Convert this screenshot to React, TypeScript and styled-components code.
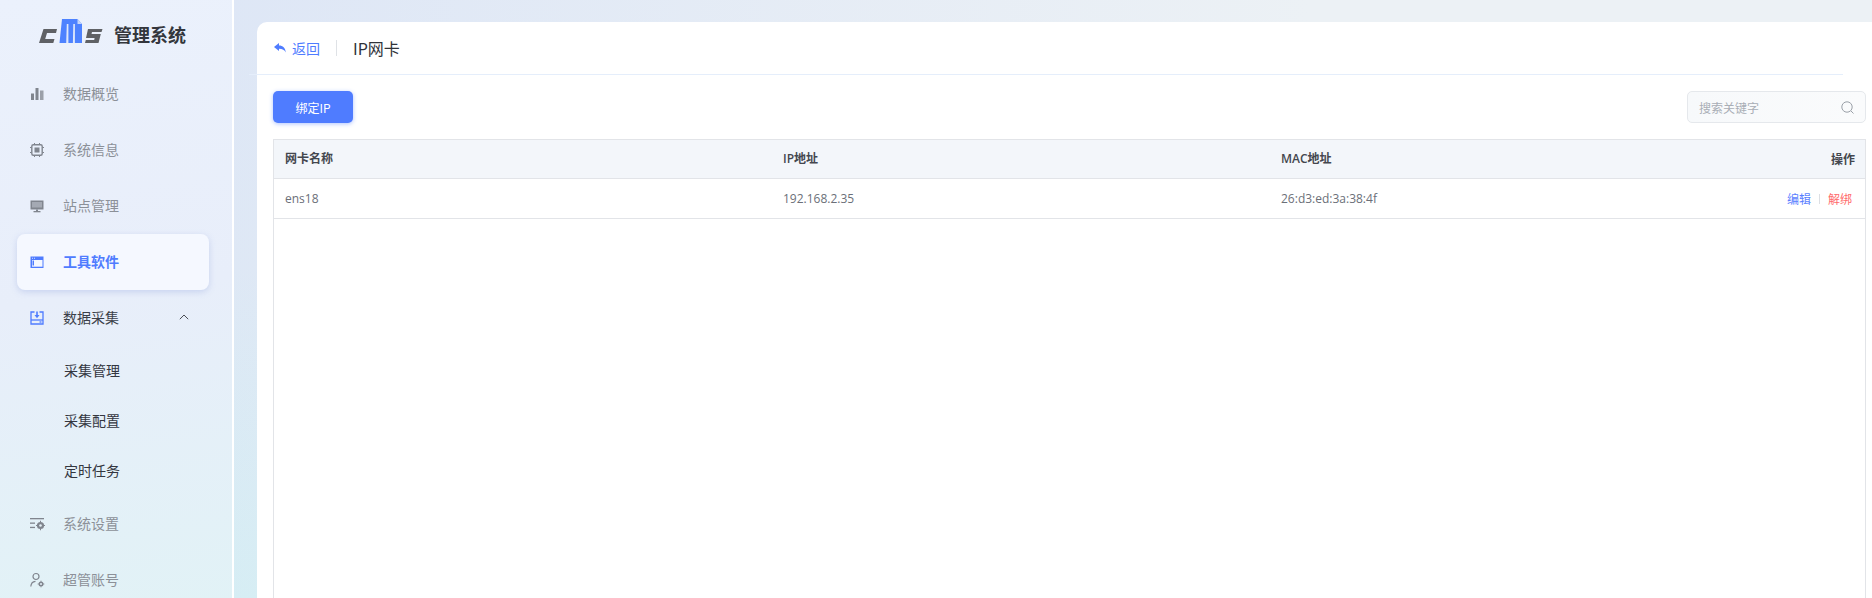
import React from "react";
import styled, { createGlobalStyle } from "styled-components";

const Global = createGlobalStyle`
  html, body { margin: 0; padding: 0; height: 598px; overflow: hidden; }
  body { font-family: "Noto Sans CJK SC", "Liberation Sans", sans-serif; }
  * { box-sizing: border-box; }
`;

const Page = styled.div`
  display: flex;
  width: 1872px;
  height: 598px;
  overflow: hidden;
  background:
    linear-gradient(90deg, rgba(236, 241, 245, 0) 8%, #ecf1f5 70%),
    linear-gradient(180deg, #dde6f6 0%, #dde7f5 45%, #d4edf4 100%);
`;

const Sidebar = styled.aside`
  flex: 0 0 234px;
  height: 608px;
  border-right: 2px solid #fff;
  background: linear-gradient(172deg, #ebf1fc 0%, #e8eefa 48%, #e1f2f6 100%);
`;

const Brand = styled.div`
  display: flex;
  align-items: center;
  height: 66px;
  padding: 4px 0 0 38px;
  gap: 11px;
`;

const BrandName = styled.span`
  font-size: 18px;
  font-weight: 700;
  color: #33363c;
  line-height: 26px;
  margin-top: -2px;
`;

const Nav = styled.nav`
  display: flex;
  flex-direction: column;
`;

const NavItem = styled.div<{ $active?: boolean; $open?: boolean }>`
  display: flex;
  align-items: center;
  height: 56px;
  margin: 0 23px 0 17px;
  padding-left: 13px;
  gap: 19px;
  font-size: 14px;
  border-radius: 8px;
  color: ${(p) => (p.$active ? "#4f7cff" : p.$open ? "#3b3f48" : "#8c9098")};
  font-weight: ${(p) => (p.$active ? 700 : 400)};
  background: ${(p) => (p.$active ? "#f5f8ff" : "transparent")};
  box-shadow: ${(p) => (p.$active ? "0 2px 6px rgba(140,160,220,.35)" : "none")};
`;

const NavIcon = styled.span<{ $color?: string }>`
  display: flex;
  width: 14px;
  height: 14px;
  flex: none;
  color: ${(p) => p.$color || "#80858e"};
  svg { display: block; overflow: visible; }
`;

const NavLabel = styled.span`
  flex: 1;
  margin-top: -2px;
`;

const Chevron = styled.span`
  display: flex;
  margin: -3px 20px 0 0;
  color: #4a4e56;
`;

const SubNav = styled.div`
  display: flex;
  flex-direction: column;
`;

const SubItem = styled.div`
  display: flex;
  align-items: center;
  height: 50px;
  padding: 0 0 3px 64px;
  font-size: 14px;
  color: #33363f;
`;

const Main = styled.main`
  flex: 1;
  min-width: 0;
  padding: 22px 0 0 23px;
`;

const Card = styled.section`
  position: relative;
  height: 600px;
  padding: 0 6px 0 16px;
  background: #fff;
  border-radius: 10px 0 0 0;
`;

const TopBar = styled.header`
  display: flex;
  align-items: center;
  height: 53px;
  margin: 0 23px 0 -24px;
  padding: 0 0 0 25px;
  border-bottom: 1px solid #e5eefb;
`;

const BackLink = styled.span`
  display: flex;
  align-items: center;
  gap: 6px;
  font-size: 14px;
  color: #4f7cff;
`;

const TitleDivider = styled.span`
  width: 1px;
  height: 16px;
  margin: 0 16px;
  background: #dfe2e6;
`;

const Title = styled.h1`
  margin: 0;
  font-size: 16px;
  font-weight: 400;
  color: #30333a;
`;

const Toolbar = styled.div`
  display: flex;
  justify-content: space-between;
  padding-top: 16px;
`;

const PrimaryButton = styled.button`
  width: 80px;
  height: 32px;
  padding: 0;
  border: 0;
  border-radius: 5px;
  font: inherit;
  font-size: 12px;
  color: #fff;
  background: #4f7cff;
  box-shadow: 0 1px 4px rgba(79, 124, 255, 0.45);
`;

const SearchBox = styled.div`
  display: flex;
  align-items: center;
  justify-content: space-between;
  width: 179px;
  height: 32px;
  padding: 0 11px 0 11px;
  border: 1px solid #e5e8ec;
  border-radius: 5px;
  background: linear-gradient(90deg, #f7f9fb, #fafbfc);
  font-size: 12px;
  color: #a9aeb6;
  svg { display: block; color: #9aa0a8; }
`;

const Table = styled.div`
  height: 500px;
  margin-top: 16px;
  border: 1px solid #e2e4e8;
  border-bottom: 0;
`;

const Row = styled.div<{ $head?: boolean }>`
  display: grid;
  grid-template-columns: 498px 498px 498px 1fr;
  align-items: center;
  height: ${(p) => (p.$head ? "39px" : "40px")};
  padding-bottom: ${(p) => (p.$head ? "2px" : "0")};
  border-bottom: 1px solid #e2e4e8;
  font-size: 12px;
  font-weight: ${(p) => (p.$head ? 600 : 400)};
  color: ${(p) => (p.$head ? "#44474e" : "#6b6f78")};
  background: ${(p) => (p.$head ? "#f3f6fa" : "#fff")};
`;

const Cell = styled.div<{ $end?: boolean }>`
  display: flex;
  align-items: center;
  justify-content: ${(p) => (p.$end ? "flex-end" : "flex-start")};
  padding: 0 ${(p) => (p.$end ? "10px" : "12px")} 0 ${(p) => (p.$end ? "0" : "11px")};
  font-family: ${(p) => (p.$end ? "inherit" : '"Open Sans", "Noto Sans CJK SC", sans-serif')};
`;

const RowActions = styled.div`
  display: flex;
  align-items: center;
  margin-right: 3px;
`;

const RowAction = styled.span<{ $danger?: boolean }>`
  font-weight: 400;
  color: ${(p) => (p.$danger ? "#ff6b6b" : "#5b7fff")};
`;

const ActionDivider = styled.span`
  width: 1px;
  height: 10px;
  margin: 0 8px;
  background: #dcdfe4;
`;

const Logo = () => (
  <svg width="65" height="32" viewBox="0 0 65 32">
    <path fill="#5f6165" d="M5.500 10H19l-1 4H9l-1.800 6H16.500l-1.200 4H1z" />
    <path fill="#4d82ff" d="M24 0h15.500L44 5v19H21.500z" />
    <path fill="#dfe8fb" d="M28.800 5h1.600v19h-2.200zM35.300 5h1.600v19h-2z" />
    <path fill="#c5d6fb" d="M39.500 0v5H44z" />
    <path fill="#5f6165" d="M50 10h14.500l-1 3H54l-.5 2h9.300l-2.300 9H47l.8-3h8.400l.4-2H48z" />
  </svg>
);

const IconBars = () => (
  <svg width="14" height="14" viewBox="0 0 14 14" fill="currentColor">
    <rect x="1" y="6.500" width="3" height="6.500" />
    <rect x="5.500" y="1" width="3" height="12" />
    <rect x="10" y="3.500" width="3.500" height="9.500" opacity=".75" />
  </svg>
);

const IconChip = () => (
  <svg width="14" height="14" viewBox="0 0 14 14" fill="none" stroke="currentColor">
    <rect x="1.800" y="1.800" width="10.400" height="10.400" rx="1.500" strokeWidth="1.400" />
    <rect x="4.500" y="4.500" width="5" height="5" fill="currentColor" stroke="none" />
    <path d="M4.500 0v1.500M9.500 0v1.500M4.500 12.500V14M9.500 12.500V14M0 4.500h1.500M0 9.500h1.500M12.500 4.500H14M12.500 9.500H14" strokeWidth="1" />
  </svg>
);

const IconMonitor = () => (
  <svg width="14" height="14" viewBox="0 0 14 14" fill="currentColor">
    <path d="M0.500 1.500h13v9h-13z" />
    <path fill="#e8eefa" d="M2 3h10v5.500H2z" opacity=".35" />
    <rect x="6" y="10.500" width="2" height="2" />
    <rect x="3.500" y="12" width="7" height="1.300" />
  </svg>
);

const IconWindow = () => (
  <svg width="14" height="14" viewBox="0 0 14 14">
    <path fill="#4f7cff" d="M0.500 1.500h13v11.500h-13z" />
    <path fill="#f5f8ff" d="M2 5h10.500v6.700H2z" />
    <path fill="#d7e2ff" d="M2 2.700h1v1H2zM4 2.700h1v1H4z" />
    <path fill="#4f7cff" d="M2.500 5.500h1.500v5H2.500z" />
  </svg>
);

const IconDownload = () => (
  <svg width="14" height="14" viewBox="0 0 14 14" fill="none" stroke="currentColor" strokeWidth="1.300">
    <path d="M4.500 1H1v12h12V1H9.500" />
    <path d="M1 9h12" />
    <path d="M7 0.500v5" strokeWidth="1.600" />
    <path d="M4.500 3.900h5L7 7.200z" fill="currentColor" stroke="none" />
    <path d="M9.500 11h2" />
  </svg>
);

const IconSettingsList = () => (
  <svg width="15" height="14" viewBox="0 0 15 14" fill="currentColor">
    <rect x="0" y="1" width="14" height="1.300" />
    <rect x="0" y="5.500" width="5" height="1.300" />
    <rect x="0" y="9.800" width="5" height="1.300" />
    <circle cx="10.500" cy="8.500" r="3.600" />
    <circle cx="10.500" cy="8.500" r="1.300" fill="#e4f1f7" />
    <path d="M10 3.800h1v1.500h-1zM10 11.700h1v1.500h-1zM6 8h1.500v1H6zM13.500 8H15v1h-1.500z" />
  </svg>
);

const IconUserGear = () => (
  <svg width="15" height="15" viewBox="0 0 15 15" fill="none" stroke="currentColor" strokeWidth="1.200">
    <circle cx="6" cy="3.500" r="3" />
    <path d="M0.800 13.500c.2-3 2-5 4.700-5.200" />
    <circle cx="11" cy="11" r="2.500" fill="currentColor" stroke="none" />
    <circle cx="11" cy="11" r="1" fill="#e4f1f7" stroke="none" />
    <path d="M11 7.700v1M11 13.300v1M7.700 11h1M13.300 11h1" strokeWidth="1" />
  </svg>
);

const IconChevronUp = () => (
  <svg width="10" height="6" viewBox="0 0 10 6" fill="none" stroke="currentColor" strokeWidth="1">
    <path d="M0.800 5.200 5 1l4.200 4.200" />
  </svg>
);

const IconBack = () => (
  <svg width="12" height="10" viewBox="0 0 12 10" fill="#4f7cff">
    <path d="M0 4 5 0v2.500c3.800 0 6.400 2.400 6.800 7C10.500 7 8.500 5.800 5 5.800V8z" />
  </svg>
);

const IconSearch = () => (
  <svg width="13" height="13" viewBox="0 0 13 13" fill="none" stroke="currentColor" strokeWidth="1">
    <circle cx="6" cy="6" r="5.200" />
    <path d="m10 10 2.500 2.500" />
  </svg>
);

export default function App() {
  return (
    <Page>
      <Global />
      <Sidebar>
        <Brand>
          <Logo />
          <BrandName>管理系统</BrandName>
        </Brand>
        <Nav>
          <NavItem><NavIcon><IconBars /></NavIcon><NavLabel>数据概览</NavLabel></NavItem>
          <NavItem><NavIcon><IconChip /></NavIcon><NavLabel>系统信息</NavLabel></NavItem>
          <NavItem><NavIcon><IconMonitor /></NavIcon><NavLabel>站点管理</NavLabel></NavItem>
          <NavItem $active><NavIcon><IconWindow /></NavIcon><NavLabel>工具软件</NavLabel></NavItem>
          <NavItem $open>
            <NavIcon $color="#4f7cff"><IconDownload /></NavIcon>
            <NavLabel>数据采集</NavLabel>
            <Chevron><IconChevronUp /></Chevron>
          </NavItem>
          <SubNav>
            <SubItem>采集管理</SubItem>
            <SubItem>采集配置</SubItem>
            <SubItem>定时任务</SubItem>
          </SubNav>
          <NavItem><NavIcon><IconSettingsList /></NavIcon><NavLabel>系统设置</NavLabel></NavItem>
          <NavItem><NavIcon><IconUserGear /></NavIcon><NavLabel>超管账号</NavLabel></NavItem>
        </Nav>
      </Sidebar>
      <Main>
        <Card>
          <TopBar>
            <BackLink><IconBack />返回</BackLink>
            <TitleDivider />
            <Title>IP网卡</Title>
          </TopBar>
          <Toolbar>
            <PrimaryButton>绑定IP</PrimaryButton>
            <SearchBox>
              搜索关键字
              <IconSearch />
            </SearchBox>
          </Toolbar>
          <Table>
            <Row $head>
              <Cell>网卡名称</Cell>
              <Cell>IP地址</Cell>
              <Cell>MAC地址</Cell>
              <Cell $end>操作</Cell>
            </Row>
            <Row>
              <Cell>ens18</Cell>
              <Cell>192.168.2.35</Cell>
              <Cell>26:d3:ed:3a:38:4f</Cell>
              <Cell $end>
                <RowActions>
                  <RowAction>编辑</RowAction>
                  <ActionDivider />
                  <RowAction $danger>解绑</RowAction>
                </RowActions>
              </Cell>
            </Row>
          </Table>
        </Card>
      </Main>
    </Page>
  );
}
